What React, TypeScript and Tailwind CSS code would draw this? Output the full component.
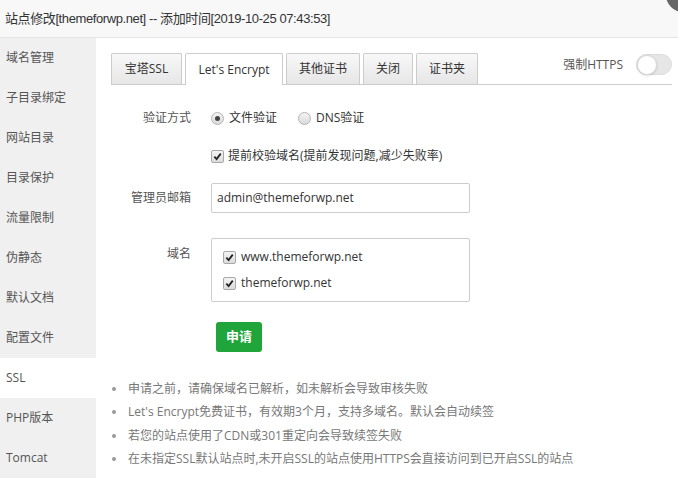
import React from "react";

const font = { fontFamily: '"Open Sans", "Noto Sans CJK SC", sans-serif' };
const titleFont = { fontFamily: '"Liberation Sans", "Noto Sans CJK SC", sans-serif' };

const sideItems = ["域名管理", "子目录绑定", "网站目录", "目录保护", "流量限制", "伪静态", "默认文档", "配置文件", "SSL", "PHP版本", "Tomcat"];

const tabs: { t: string; w: string }[] = [
  { t: "宝塔SSL", w: "w-[71px]" },
  { t: "Let's Encrypt", w: "w-[98px]" },
  { t: "其他证书", w: "w-[74px]" },
  { t: "关闭", w: "w-[50px]" },
  { t: "证书夹", w: "w-[62px]" },
];

function Check() {
  return (
    <span className="flex h-[13px] w-[13px] items-center justify-center rounded-[2px] border border-[#a8a8a8] bg-gradient-to-b from-[#f4f4f4] to-[#dcdcdc]">
      <svg width="9" height="9" viewBox="0 0 10 10">
        <path d="M1.5 5.2 L4 7.8 L8.6 1.8" stroke="#222" strokeWidth="2" fill="none" />
      </svg>
    </span>
  );
}

function Radio({ on }: { on: boolean }) {
  return (
    <span className="flex h-[13px] w-[13px] items-center justify-center rounded-full border border-[#b4b4b4] bg-gradient-to-b from-[#f4f4f4] to-[#dadada]">
      {on && <span className="h-[5px] w-[5px] rounded-full bg-[#444]" />}
    </span>
  );
}

export default function App() {
  return (
    <div className="relative h-[478px] w-[678px] overflow-hidden bg-white text-[#333]" style={font}>
      <div className="flex h-[38px] items-center border-b border-[#e5e5e5] bg-[#f8f8f8] pl-[5px] text-[13px] tracking-[-0.4px] text-[#333]" style={titleFont}>
        站点修改[themeforwp.net] -- 添加时间[2019-10-25 07:43:53]
      </div>
      <div className="absolute right-[-22px] top-[-22px] h-[34px] w-[34px] rounded-full bg-[#666]" />
      <div className="flex">
        <div className="w-[96px] shrink-0 bg-[#f0f0f0]">
          {sideItems.map((s) => (
            <div
              key={s}
              className={`flex h-[40px] items-center pl-[6px] text-[12px] text-[#555] ${s === "SSL" ? "bg-white" : ""}`}
            >
              {s}
            </div>
          ))}
        </div>
        <div className="flex-1 pl-[15px] pr-[6px] pt-[15px]">
          <div className="flex items-end gap-[3px] border-b border-[#ccc]">
            {tabs.map(({ t, w }) =>
              t === "Let's Encrypt" ? (
                <div
                  key={t}
                  className={`${w} mb-[-1px] flex h-[32px] items-center justify-center rounded-t-[2px] border border-b-0 border-[#ccc] bg-white text-[12px] text-[#333]`}
                >
                  {t}
                </div>
              ) : (
                <div
                  key={t}
                  className={`${w} flex h-[31px] items-center justify-center rounded-t-[2px] border border-b-0 border-[#ccc] bg-gradient-to-b from-[#f8f8f8] to-[#e6e6e6] text-[12px] text-[#333]`}
                >
                  {t}
                </div>
              )
            )}
            <div className="flex-1" />
            <div className="mb-[9px] flex items-center">
              <span className="text-[12px] text-[#555]">强制HTTPS</span>
              <span className="ml-[13px] flex h-[21px] w-[36px] items-center rounded-full border border-[#dcdcdc] bg-[#e6e6e6]">
                <span className="h-[20px] w-[20px] rounded-full border border-[#d8d8d8] bg-white shadow-sm" />
              </span>
            </div>
          </div>

          <div className="mt-[24px] flex items-center text-[12px]">
            <div className="w-[80px] text-right text-[#555]">验证方式</div>
            <div className="ml-[20px] flex items-center">
              <Radio on={true} />
              <span className="ml-[5px]">文件验证</span>
              <span className="ml-[21px]"><Radio on={false} /></span>
              <span className="ml-[5px]">DNS验证</span>
            </div>
          </div>

          <div className="mt-[20px] flex items-center pl-[100px] text-[12px]">
            <Check />
            <span className="ml-[4px]">提前校验域名(提前发现问题,减少失败率)</span>
          </div>

          <div className="mt-[18px] flex items-center text-[12px]">
            <div className="w-[80px] text-right text-[#555]">管理员邮箱</div>
            <div className="ml-[20px] flex h-[30px] w-[259px] items-center rounded-[2px] border border-[#ccc] pl-[5px] text-[#333]">
              admin@themeforwp.net
            </div>
          </div>

          <div className="mt-[25px] flex items-start text-[12px]">
            <div className="mt-[7px] w-[80px] text-right text-[#555]">域名</div>
            <div className="ml-[20px] flex h-[64px] w-[259px] flex-col justify-center gap-[8px] rounded-[2px] border border-[#ccc] pl-[11px]">
              <div className="flex items-center">
                <Check />
                <span className="ml-[5px]">www.themeforwp.net</span>
              </div>
              <div className="flex items-center">
                <Check />
                <span className="ml-[5px]">themeforwp.net</span>
              </div>
            </div>
          </div>

          <div className="mt-[20px] pl-[105px]">
            <div className="flex h-[30px] w-[46px] items-center justify-center rounded-[3px] bg-[#20a53a] text-[13px] font-bold text-white">
              申请
            </div>
          </div>

          <ul className="mt-[25px] text-[12px] text-[#777]">
            {[
              "申请之前，请确保域名已解析，如未解析会导致审核失败",
              "Let's Encrypt免费证书，有效期3个月，支持多域名。默认会自动续签",
              "若您的站点使用了CDN或301重定向会导致续签失败",
              "在未指定SSL默认站点时,未开启SSL的站点使用HTTPS会直接访问到已开启SSL的站点",
            ].map((t) => (
              <li key={t} className="flex h-[23.5px] items-center">
                <span className="ml-[1px] mr-[12px] h-[4px] w-[4px] rounded-full bg-[#999]" />
                {t}
              </li>
            ))}
          </ul>
        </div>
      </div>
    </div>
  );
}
